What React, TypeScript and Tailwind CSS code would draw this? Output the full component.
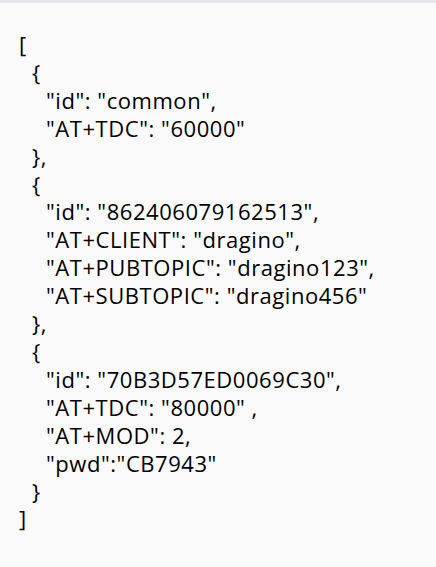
const lines: [number, string][] = [
  [0, "["],
  [1, "{"],
  [2, "\"id\": \"common\","],
  [2, "\"AT+TDC\": \"60000\""],
  [1, "},"],
  [1, "{"],
  [2, "\"id\": \"862406079162513\","],
  [2, "\"AT+CLIENT\": \"dragino\","],
  [2, "\"AT+PUBTOPIC\": \"dragino123\","],
  [2, "\"AT+SUBTOPIC\": \"dragino456\""],
  [1, "},"],
  [1, "{"],
  [2, "\"id\": \"70B3D57ED0069C30\","],
  [2, "\"AT+TDC\": \"80000\" ,"],
  [2, "\"AT+MOD\": 2,"],
  [2, "\"pwd\":\"CB7943\""],
  [1, "}"],
  [0, "]"],
];

const indent = ["pl-0", "pl-[13px]", "pl-[27px]"];

export default function App() {
  return (
    <div className="w-[436px] h-[567px] bg-[#fafafa] border-t-[3px] border-[#e6e8ec] overflow-hidden">
      <div
        className="pt-[28px] pl-[19px] text-[22px] tracking-[0.55px] leading-[27.9px] text-black whitespace-pre"
        style={{ fontFamily: '"Open Sans", "Noto Sans", sans-serif' }}
      >
        {lines.map(([lvl, t], i) => (
          <div key={i} className={indent[lvl]}>
            {t}
          </div>
        ))}
      </div>
    </div>
  );
}
